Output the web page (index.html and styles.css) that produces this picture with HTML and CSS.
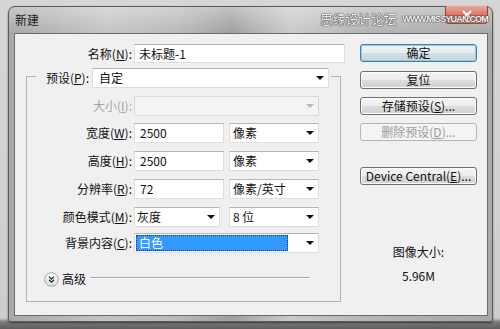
FILE: index.html
```html
<!DOCTYPE html>
<html lang="zh-CN">
<head>
<meta charset="utf-8">
<title>新建</title>
<link rel="stylesheet" href="styles.css">
</head>
<body>
<div class="window">
  <div class="titlebar">
    <span class="title">新建</span>
    <span class="closebtn"><svg width="12" height="10" viewBox="0 0 12 10"><path d="M2 1 L10 9 M10 1 L2 9" stroke="#fff" stroke-width="2.2" fill="none"/></svg></span>
    <span class="watermark"><span class="wm-cn">思缘设计论坛</span><span class="wm-en">WWW.MISSYUAN.COM</span></span>
  </div>
  <div class="client">
    <div class="left">
      <div class="row name-row">
        <span class="label name-label">名称(<u>N</u>):</span>
        <span class="input w-name">未标题-1</span>
      </div>
      <fieldset class="group">
        <legend class="legend">
          <span class="legend-label">预设(<u>P</u>):</span>
          <span class="select w-preset wide-pad"><span class="val">自定</span><span class="arrow"></span></span>
        </legend>
        <div class="row r-size">
          <span class="label disabled">大小(<u>I</u>):</span>
          <span class="select w-full disabled-box"><span class="val"></span><span class="arrow light"></span></span>
        </div>
        <div class="row r-mid">
          <span class="label">宽度(<u>W</u>):</span>
          <span class="input w-num">2500</span>
          <span class="select w-unit"><span class="val">像素</span><span class="arrow"></span></span>
        </div>
        <div class="row r-norm">
          <span class="label">高度(<u>H</u>):</span>
          <span class="input w-num">2500</span>
          <span class="select w-unit"><span class="val">像素</span><span class="arrow"></span></span>
        </div>
        <div class="row r-norm">
          <span class="label">分辨率(<u>R</u>):</span>
          <span class="input w-num">72</span>
          <span class="select w-unit"><span class="val">像素/英寸</span><span class="arrow"></span></span>
        </div>
        <div class="row r-norm">
          <span class="label">颜色模式(<u>M</u>):</span>
          <span class="select w-mode"><span class="val">灰度</span><span class="arrow"></span></span>
          <span class="select w-unit unit-gap"><span class="val">8 位</span><span class="arrow"></span></span>
        </div>
        <div class="row r-bg">
          <span class="label">背景内容(<u>C</u>):</span>
          <span class="select w-full bg-select"><span class="val highlight">白色</span><span class="arrow"></span></span>
        </div>
        <div class="adv-row">
          <svg class="adv-icon" width="15" height="15" viewBox="0 0 15 15">
            <defs><linearGradient id="g" x1="0" y1="0" x2="0" y2="1"><stop offset="0" stop-color="#ffffff"/><stop offset="1" stop-color="#dcdcdc"/></linearGradient></defs>
            <circle cx="7.5" cy="7.5" r="6.8" fill="url(#g)" stroke="#a4a4a4" stroke-width="1"/>
            <path d="M5 4.6 L7.5 7 L10 4.6 M5 7.8 L7.5 10.2 L10 7.8" stroke="#2a2a2a" stroke-width="1.3" fill="none"/>
          </svg>
          <span class="adv-text">高级</span>
          <span class="adv-line"></span>
        </div>
      </fieldset>
    </div>
    <div class="right">
      <button class="btn default">确定</button>
      <button class="btn b2">复位</button>
      <button class="btn b3">存储预设(<u>S</u>)...</button>
      <button class="btn b3 disabled-btn">删除预设(<u>D</u>)...</button>
      <button class="btn b5">Device Central(<u>E</u>)...</button>
      <div class="size-label">图像大小:</div>
      <div class="size-value">5.96M</div>
    </div>
  </div>
</div>
</body>
</html>
```
FILE: styles.css
```css
html, body {
  margin: 0;
  padding: 0;
}
body {
  width: 500px;
  height: 329px;
  overflow: hidden;
  background: linear-gradient(to bottom, #d6d6d6 0, #cdcdcd 318px, #7a7a7a 322px, #5e5e5e 329px);
  font-family: "Noto Sans CJK SC", "Noto Sans", sans-serif;
  font-size: 12px;
  color: #111;
}
.window {
  box-sizing: border-box;
  margin: 6px 0 0 8px;
  width: 485px;
  height: 316px;
  border: 1px solid #5b5b5b;
  border-radius: 7px 7px 3px 3px;
  background:
    linear-gradient(to bottom, rgba(255,255,255,0.35), rgba(255,255,255,0) 26px),
    linear-gradient(90deg, #a8a8a8 0%, #c4c4c4 20%, #b9b9b9 35%, #a0a0a0 46%, #c9c9c9 58%, #b4b4b4 75%, #a9a9a9 100%);
  padding: 0 4px 5px 5px;
  display: flex;
  flex-direction: column;
  box-shadow: 0 1px 2px rgba(0,0,0,0.5);
}
.titlebar {
  position: relative;
  height: 26px;
  flex: none;
}
.title {
  display: block;
  padding-left: 1px;
  line-height: 26px;
  font-size: 12px;
  color: #1a1a1a;
}
.closebtn {
  position: absolute;
  right: 0;
  top: -1px;
  width: 43px;
  height: 18px;
  box-sizing: border-box;
  border: 1px solid #8a4a44;
  border-top: none;
  border-radius: 0 0 4px 4px;
  background: linear-gradient(to bottom, #e8a99c, #d9786b 50%, #c9574a 51%, #d88a7a);
  display: flex;
  align-items: center;
  justify-content: center;
}
.watermark {
  position: absolute;
  right: 0;
  top: 3px;
  display: flex;
  align-items: center;
  color: #f6f6f6;
  text-shadow: 0 0 1px #3a3a3a, 0 0 1px #3a3a3a, 0 0 1px #3a3a3a;
}
.wm-cn {
  font-size: 13px;
  line-height: 18px;
  letter-spacing: -0.3px;
  margin-right: 6px;
}
.wm-en {
  font-family: "Liberation Sans", sans-serif;
  font-size: 9px;
  font-weight: bold;
  letter-spacing: -0.8px;
  white-space: nowrap;
  line-height: 18px;
}
.client {
  flex: 1;
  box-sizing: border-box;
  border: 1px solid #6c6c6c;
  background: #f0f0f0;
  padding-top: 10px;
  display: flex;
}
.left {
  width: 330px;
  flex: none;
}
.row {
  display: flex;
  align-items: center;
  height: 20px;
}
.name-row {
  height: 19px;
}
.label {
  width: 105px;
  margin-right: 2px;
  text-align: right;
  white-space: nowrap;
  line-height: 20px;
}
.name-label {
  width: 117px;
}
.label.disabled {
  color: #a4a4a4;
}
.input, .select {
  box-sizing: border-box;
  height: 100%;
  background: #fff;
  border: 1px solid #dedede;
  border-top-color: #b4b4b4;
  display: flex;
  align-items: center;
  padding-left: 4px;
  line-height: 16px;
  white-space: nowrap;
}
.w-name { width: 211px; }
.w-num { width: 90px; padding-left: 5px; }
.w-unit { width: 90px; margin-left: 5px; padding-left: 3px; }
.unit-gap { margin-left: 9px; }
.w-mode { width: 86px; padding-left: 2px; }
.w-full { width: 185px; }
.w-preset { width: 237px; height: 20px; }
.wide-pad { padding-left: 6px; }
.select .val {
  flex: 1;
}
.arrow {
  flex: none;
  width: 0;
  height: 0;
  border-left: 4px solid transparent;
  border-right: 4px solid transparent;
  border-top: 4px solid #111;
  margin-right: 4px;
}
.arrow.light {
  border-top-color: #b8b8b8;
}
.disabled-box {
  background: #f4f4f4;
  border-color: #d8d8d8;
}
.group {
  margin: 1px 0 0 11px;
  padding: 0 0 14px 0;
  width: 315px;
  box-sizing: border-box;
  border: 1px solid #b2b2b2;
  min-width: 0;
}
.legend {
  margin-left: 9px;
  padding: 4px 2px 0 4px;
  display: flex;
  align-items: center;
}
.legend-label {
  width: 49px;
  margin-right: 3px;
  text-align: right;
  white-space: nowrap;
  line-height: 20px;
}
.r-size { margin-top: 8px; }
.r-mid { margin-top: 7px; }
.r-norm { margin-top: 8px; }
.r-bg { margin-top: 6px; }
.bg-select {
  padding-left: 1px;
}
.highlight {
  align-self: stretch;
  margin: 1px 18px 1px 0;
  background: #3399ff;
  color: #fff;
  outline: 1px dotted #1a3a66;
  outline-offset: -1px;
  padding-left: 3px;
  line-height: 16px;
}
.adv-row {
  margin-top: 18px;
  height: 16px;
  display: flex;
  align-items: center;
  padding-left: 17px;
}
.adv-icon {
  flex: none;
}
.adv-text {
  margin-left: 3px;
  line-height: 16px;
}
.adv-line {
  margin-left: 4px;
  width: 220px;
  height: 1px;
  background: #a8a8a8;
  border-bottom: 1px solid #ffffff;
  margin-top: -3px;
}
.right {
  margin-left: 15px;
  width: 117px;
  flex: none;
  display: flex;
  flex-direction: column;
}
.btn {
  box-sizing: border-box;
  width: 117px;
  height: 18px;
  padding: 0;
  font-family: "Noto Sans CJK SC", "Noto Sans", sans-serif;
  font-size: 12px;
  line-height: 14px;
  color: #111;
  border: 1px solid #707070;
  border-radius: 3px;
  background: linear-gradient(to bottom, #f4f4f4 0%, #ececec 50%, #dddddd 51%, #d1d1d1 100%);
  box-shadow: inset 0 0 0 1px #fbfbfb;
  white-space: nowrap;
}
.btn.default {
  border-color: #3c7fb1;
  box-shadow: inset 0 0 0 1px #93cbe3;
  background: linear-gradient(to bottom, #eef4f6 0%, #e4ecee 50%, #d4dfe2 51%, #c8d5d8 100%);
}
.b2 { margin-top: 9px; }
.b3 { margin-top: 8px; }
.b5 { margin-top: 26px; }
.btn.disabled-btn {
  border-color: #b2b5b8;
  background: #f4f4f4;
  box-shadow: none;
  color: #9a9a9a;
}
.size-label {
  margin-top: 59px;
  text-align: center;
  line-height: 16px;
}
.size-value {
  margin-top: 8px;
  text-align: center;
  line-height: 16px;
}
```
